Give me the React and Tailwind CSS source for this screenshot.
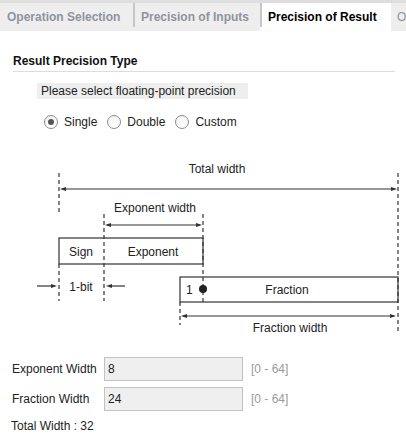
import React from "react";

const tabs = [
  { label: "Operation Selection", w: "w-[133px]" },
  { label: "Precision of Inputs", w: "w-[127px]" },
  { label: "Precision of Result", w: "w-[131px]", active: true },
  { label: "Output", w: "w-[60px]" },
];

function Arrow({ x1, x2, y }) {
  // horizontal line with filled heads at both ends
  const h = 6;
  return (
    <g>
      <line x1={x1 + 2} y1={y} x2={x2 - 2} y2={y} stroke="#333" strokeWidth="1.2" />
      <polygon points={`${x1},${y} ${x1 + h},${y - 2} ${x1 + h},${y + 2}`} fill="#333" />
      <polygon points={`${x2},${y} ${x2 - h},${y - 2} ${x2 - h},${y + 2}`} fill="#333" />
    </g>
  );
}

function Dash({ x, y1, y2 }) {
  return <line x1={x} y1={y1} x2={x} y2={y2} stroke="#333" strokeWidth="1.2" strokeDasharray="4 3" />;
}

function Diagram() {
  return (
    <svg width="406" height="190" viewBox="0 150 406 190" className="block" style={{ fontFamily: "'Liberation Sans', Arial, sans-serif" }}>
      <g fontSize="12" fill="#222">
        <text x="217" y="172" textAnchor="middle">Total width</text>
        <text x="155" y="211" textAnchor="middle">Exponent width</text>
        <text x="81" y="255" textAnchor="middle">Sign</text>
        <text x="153" y="255" textAnchor="middle">Exponent</text>
        <text x="81" y="290" textAnchor="middle">1-bit</text>
        <text x="186" y="293">1</text>
        <text x="287" y="293" textAnchor="middle">Fraction</text>
        <text x="290" y="331" textAnchor="middle">Fraction width</text>
      </g>

      <Dash x={59} y1={172} y2={212} />
      <Dash x={398} y1={172} y2={333} />
      <Arrow x1={60} x2={397} y={188} />

      <Dash x={104} y1={213} y2={300} />
      <Dash x={203} y1={213} y2={301} />
      <Arrow x1={105} x2={202} y={224} />

      <rect x="59" y="237" width="144" height="26" fill="none" stroke="#333" strokeWidth="1.2" />
      <Dash x={59} y1={263} y2={300} />

      <line x1="37" y1="285" x2="52" y2="285" stroke="#333" strokeWidth="1.2" />
      <polygon points="57,285 51,283 51,287" fill="#333" />
      <line x1="111" y1="285" x2="125" y2="285" stroke="#333" strokeWidth="1.2" />
      <polygon points="106,285 112,283 112,287" fill="#333" />

      <rect x="180" y="276" width="218" height="25" fill="none" stroke="#333" strokeWidth="1.2" />
      <circle cx="203" cy="288" r="4" fill="#222" />
      <Dash x={180} y1={301} y2={324} />
      <Arrow x1={181} x2={396} y={315} />
    </svg>
  );
}

function Radio({ label, checked }) {
  return (
    <label className="flex items-center">
      <span className="w-[14px] h-[14px] rounded-full border border-[#8c8c8c] bg-gradient-to-b from-[#f4f4f4] to-white flex items-center justify-center">
        {checked && <span className="w-[6px] h-[6px] rounded-full bg-[#555]" />}
      </span>
      <span className="ml-[6px] text-[12px] text-[#222]">{label}</span>
    </label>
  );
}

function Field({ label, value }) {
  return (
    <div className="flex items-center h-[24px]">
      <span className="w-[92px] text-[12px] text-[#222]">{label}</span>
      <div className="w-[139px] h-[24px] bg-[#efefef] border border-[#c3c3c3] flex items-center pl-[3px] text-[12px] text-[#222]">
        {value}
      </div>
      <span className="ml-[8px] text-[12px] text-[#9a9a9a]">[0 - 64]</span>
    </div>
  );
}

export default function App() {
  return (
    <div className="w-[406px] h-[440px] bg-white overflow-hidden" style={{ fontFamily: "'Liberation Sans', Arial, sans-serif" }}>
      {/* Tabs */}
      <div className="flex h-[31px] bg-[#eeeeee] border-t-[3px] border-[#dedede] whitespace-nowrap overflow-hidden">
        {tabs.map((t, i) => (
          <div key={t.label} className={`flex shrink-0 ${t.w} ${t.active ? "bg-white" : ""}`}>
            {i > 0 && !t.active && !tabs[i - 1].active && <span className="w-[2px] h-[24px] bg-[#c6c6c6] shrink-0" />}
            {i > 0 && t.active && <span className="w-[2px] h-[24px] bg-[#c6c6c6] shrink-0" />}
            <span
              className={`pt-[5px] text-[12px] font-bold ${i === 0 ? "pl-[7px]" : "pl-[6px]"} ${
                t.active ? "text-black" : "text-[#8e949c]"
              } ${i === 3 ? "font-normal pl-[4px]" : ""}`}
            >
              {t.label}
            </span>
          </div>
        ))}
      </div>

      {/* Content */}
      <div className="pl-[13px] pr-[11px]">
        <div className="mt-[23px] text-[12px] font-bold text-[#111] leading-[14px]">Result Precision Type</div>
        <div className="mt-[3px] h-px bg-[#dddddd]" />
        <div className="mt-[11px] ml-[24px] w-[211px] h-[16px] bg-[#eeeeee] pl-[4px] text-[12px] leading-[16px] text-[#222]">
          Please select floating-point precision
        </div>
        <div className="mt-[16px] ml-[31px] flex items-center gap-[10px] h-[14px]">
          <Radio label="Single" checked />
          <Radio label="Double" />
          <Radio label="Custom" />
        </div>
      </div>

      <div className="mt-[22px]">
        <Diagram />
      </div>

      <div className="pl-[12px] mt-[16px] flex flex-col gap-[6px]">
        <Field label="Exponent Width" value="8" />
        <Field label="Fraction Width" value="24" />
        <div className="-ml-[1px] text-[12px] text-[#222]">Total Width : 32</div>
      </div>
    </div>
  );
}
